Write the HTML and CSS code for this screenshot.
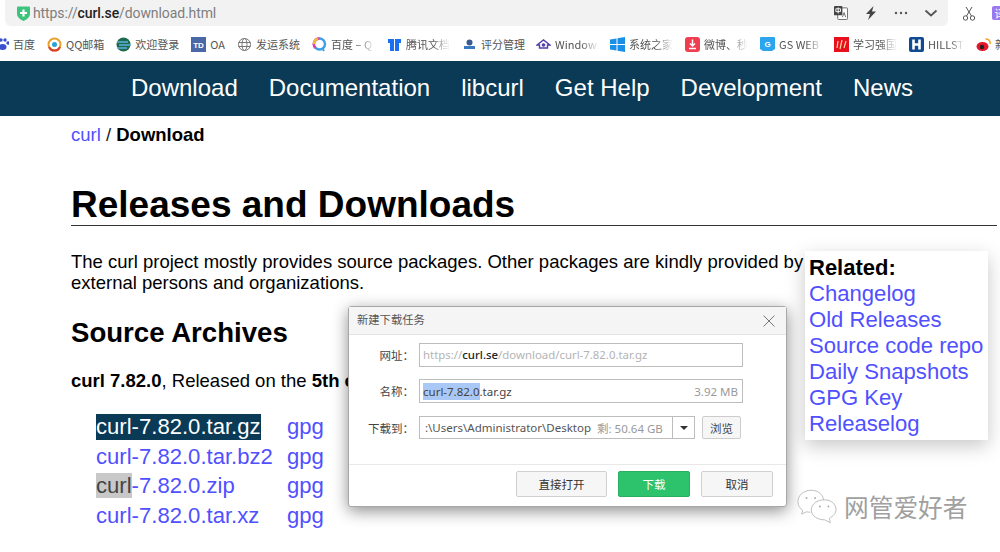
FILE: index.html
```html
<!DOCTYPE html>
<html lang="zh">
<head>
<meta charset="utf-8">
<title>curl - Download</title>
<link rel="stylesheet" href="styles.css">
</head>
<body>
<div class="toolbar">
  <div class="urlbar">
    <svg class="shield" viewBox="0 0 13 15"><path d="M0 1.500Q0 .5 1 .5H12Q13 .5 13 1.500V8Q13 12 6.500 15Q0 12 0 8Z" fill="#3cc47c"/><path d="M6.500 3.500V10.500M3 7H10" stroke="#fff" stroke-width="2.200"/></svg>
    <span class="url"><span class="dim">https://</span><b class="host">curl.se</b><span class="dim">/download.html</span></span>
    <div class="bar-tools">
      <svg class="ic14" viewBox="0 0 15 15"><rect x="4" y="2" width="10.500" height="12.500" rx="1" fill="#fff" stroke="#666"/><rect x="0" y="0" width="9" height="10" rx="1" fill="#444"/><path d="M2 3H7V6H2ZM4.500 1.500V8" stroke="#fff" fill="none"/><path d="M9 12L10.800 7L12.500 12" stroke="#666" fill="none"/></svg>
      <svg class="ic14" viewBox="0 0 14 14"><path d="M9.500 0L2 8H6L4 14L12 5.500H8Z" fill="#444"/></svg>
      <svg class="ic14" viewBox="0 0 14 14"><circle cx="2" cy="7" r="1.200" fill="#555"/><circle cx="7" cy="7" r="1.200" fill="#555"/><circle cx="12" cy="7" r="1.200" fill="#555"/></svg>
      <svg class="ic14" viewBox="0 0 14 14"><path d="M1.500 4.500L7 9.500L12.500 4.500" fill="none" stroke="#555" stroke-width="1.800"/></svg>
    </div>
  </div>
  <svg class="scissors" viewBox="0 0 12 15"><circle cx="2.500" cy="12" r="2.200" fill="none" stroke="#555"/><circle cx="9.500" cy="12" r="2.200" fill="none" stroke="#555"/><path d="M3.500 10L9 1M8.500 10L3 1" stroke="#555" fill="none"/></svg>
  <div class="purple">译</div>
</div>

<div class="bookmarks">
  <div class="bm first"><svg class="bi" viewBox="0 0 15 15"><g fill="#3a4fd0"><circle cx="3" cy="6" r="1.700"/><circle cx="7" cy="3" r="1.700"/><circle cx="11" cy="3" r="1.700"/><circle cx="14" cy="6" r="1.700"/><ellipse cx="8.500" cy="10" rx="4" ry="3"/></g></svg><span class="bt">百度</span></div>
  <div class="bm"><svg class="bi" viewBox="0 0 15 15"><circle cx="7.500" cy="7.500" r="6" fill="none" stroke="#e8a02c" stroke-width="2"/><path d="M2 10A6 6 0 0 0 13 10" fill="none" stroke="#d8402c" stroke-width="2"/><circle cx="7.500" cy="7.500" r="2.500" fill="#2ca0d8"/></svg><span class="bt">QQ邮箱</span></div>
  <div class="bm"><svg class="bi" viewBox="0 0 15 15"><circle cx="7.500" cy="7.500" r="7" fill="#1e6a4c"/><path d="M1 5H12M3 8H15M1 11H11" stroke="#5fb0e0" stroke-width="1.500"/></svg><span class="bt">欢迎登录</span></div>
  <div class="bm"><svg class="bi" viewBox="0 0 15 15"><rect width="15" height="15" fill="#4a68a8"/><text x="7.500" y="11" class="bi-text">TD</text></svg><span class="bt">OA</span></div>
  <div class="bm"><svg class="bi" viewBox="0 0 15 15"><circle cx="7.500" cy="7.500" r="6" fill="none" stroke="#777"/><ellipse cx="7.500" cy="7.500" rx="2.500" ry="6" fill="none" stroke="#777"/><path d="M1.500 5.500H13.500M1.500 9.500H13.500" stroke="#777"/></svg><span class="bt">发运系统</span></div>
  <div class="bm"><svg class="bi" viewBox="0 0 15 15"><circle cx="7.500" cy="7" r="5.500" fill="none" stroke="#3aa0e8" stroke-width="2.400"/><path d="M7.500 1.500A5.500 5.500 0 0 0 3.500 11" fill="none" stroke="#e040b0" stroke-width="2.400"/><path d="M2 7A5.500 5.500 0 0 1 6 1.700" fill="none" stroke="#f0c030" stroke-width="2.400"/><path d="M10 11L12 14" stroke="#3aa0e8" stroke-width="2"/></svg><span class="bt fade">百度 – Q</span></div>
  <div class="bm"><svg class="bi" viewBox="0 0 15 15"><path d="M1 2H7V14H3V6H1ZM8 2H14V6H12V14H8Z" fill="#1a70f0"/></svg><span class="bt fade">腾讯文档</span></div>
  <div class="bm tight"><svg class="bi" viewBox="0 0 15 15"><circle cx="7.500" cy="5.500" r="3" fill="#3a5a90"/><path d="M2 12H13V9H2Z" fill="#3a78c0"/></svg><span class="bt">评分管理</span></div>
  <div class="bm tight"><svg class="bi" viewBox="0 0 15 15"><path d="M1 8L7.500 3L14 8H11.500V11H3.500V8Z" fill="none" stroke="#5040a8" stroke-width="1.400"/><circle cx="7.500" cy="8" r="1.800" fill="#5040a8"/></svg><span class="bt fade">Windows</span></div>
  <div class="bm"><svg class="bi" viewBox="0 0 15 15"><path d="M0 2.500L6.500 1.500V7H0ZM7.500 1.300L15 0V7H7.500ZM0 8H6.500V13.500L0 12.500ZM7.500 8H15V15L7.500 13.700Z" fill="#1a8fe8"/></svg><span class="bt fade">系统之家</span></div>
  <div class="bm"><svg class="bi" viewBox="0 0 15 15"><rect width="15" height="15" rx="3" fill="#ee3e50"/><path d="M7.500 2.500V8.500M5 6.500L7.500 9L10 6.500M4 11.500H11" stroke="#fff" stroke-width="1.500" fill="none"/></svg><span class="bt fade">微博、秒</span></div>
  <div class="bm tight"><svg class="bi" viewBox="0 0 15 15"><path d="M0 1Q0 0 1 0H14Q15 0 15 1V12L12 14H3L0 12Z" fill="#2ba5ee"/><text x="7.500" y="9.500" class="bi-text">G</text></svg><span class="bt fade">GS WEB</span></div>
  <div class="bm"><svg class="bi" viewBox="0 0 15 15"><rect width="15" height="15" fill="#e8101c"/><path d="M4 4L3 11M8 3L6 12M12 4L10 11" stroke="#f8d8a0" stroke-width="1.200"/></svg><span class="bt fade">学习强国</span></div>
  <div class="bm"><svg class="bi" viewBox="0 0 15 15"><rect width="15" height="15" rx="2" fill="#104a90"/><path d="M4.500 2.500V12.500M10.500 2.500V12.500M4.500 7.500H10.500" stroke="#fff" stroke-width="2.600"/></svg><span class="bt fade short">HILLST</span></div>
  <div class="bm"><svg class="bi" viewBox="0 0 15 15"><ellipse cx="6.500" cy="9.500" rx="6" ry="4.500" fill="#e6162d"/><circle cx="6" cy="10" r="2.200" fill="#222"/><path d="M9.500 2A4 4 0 0 1 14 7" fill="none" stroke="#f0a020" stroke-width="1.500"/></svg><span class="bt">新</span></div>
</div>

<nav class="nav">
  <a>Download</a><a>Documentation</a><a>libcurl</a><a>Get Help</a><a>Development</a><a>News</a>
</nav>

<main class="page">
  <div class="crumb"><a class="lnk">curl</a> / <b>Download</b></div>
  <h1>Releases and Downloads</h1>
  <p class="intro">The curl project mostly provides source packages. Other packages are kindly provided by<br>external persons and organizations.</p>
  <h2>Source Archives</h2>
  <p class="rel"><b>curl 7.82.0</b>, Released on the <b>5th of March 2022</b>.</p>
  <div class="files">
    <a class="sel">curl-7.82.0.tar.gz</a><a class="lnk">gpg</a>
    <a class="lnk"><span>curl-7.82.0.tar.bz2</span></a><a class="lnk">gpg</a>
    <a class="lnk"><span class="grey">curl</span>-7.82.0.zip</a><a class="lnk">gpg</a>
    <a class="lnk">curl-7.82.0.tar.xz</a><a class="lnk">gpg</a>
  </div>
</main>

<aside class="related">
  <b>Related:</b>
  <a class="lnk">Changelog</a>
  <a class="lnk">Old Releases</a>
  <a class="lnk">Source code repo</a>
  <a class="lnk">Daily Snapshots</a>
  <a class="lnk">GPG Key</a>
  <a class="lnk">Releaselog</a>
</aside>

<section class="dialog">
  <header class="dlg-head"><span>新建下载任务</span>
    <svg class="close" viewBox="0 0 12 12"><path d="M.5 .5L11.500 11.500M11.500 .5L.5 11.500" stroke="#777" fill="none"/></svg>
  </header>
  <div class="dlg-body">
    <div class="row"><label>网址：</label><div class="field"><span class="faint">https://</span><b class="host">curl.se</b><span class="faint">/download/curl-7.82.0.tar.gz</span></div></div>
    <div class="row"><label>名称：</label><div class="field"><span><span class="picked">curl-7.82.0</span>.tar.gz</span><span class="size">3.92 MB</span></div></div>
    <div class="row"><label>下载到：</label>
      <div class="field combo"><span class="path">:\Users\Administrator\Desktop</span><span class="free">剩: 50.64 GB</span><span class="drop"><i class="tri"></i></span></div>
      <button class="browse">浏览</button>
    </div>
  </div>
  <footer class="dlg-foot">
    <button class="btn wide">直接打开</button>
    <button class="btn green">下载</button>
    <button class="btn">取消</button>
  </footer>
</section>

<div class="mark">
  <svg class="wx" viewBox="0 0 42 36"><path d="M15 1C7 1 1 6 1 13C1 17 3 20 6 22L5 26L10 23.500C11 24 13 24 14 24" fill="#fff" stroke="#bbb"/><path d="M15 1C22 1 27 5 28 11" fill="none" stroke="#bbb"/><circle cx="10" cy="9" r="1" fill="#aaa"/><circle cx="19" cy="9" r="1" fill="#aaa"/><path d="M29 11C21 11 15 15.500 15 21.500C15 27.500 21 32 29 32L35 35L34 30.500C38 28 41 25 41 21.500C41 15.500 36 11 29 11Z" fill="#fff" stroke="#bbb"/><circle cx="24" cy="18" r="1" fill="#aaa"/><circle cx="33" cy="18" r="1" fill="#aaa"/></svg>
  <span>网管爱好者</span>
</div>
</body>
</html>
```
FILE: styles.css
```css
* { box-sizing: border-box; }
html, body { margin: 0; padding: 0; }
body {
  width: 1000px;
  height: 552px;
  overflow: hidden;
  position: relative;
  background: #fff;
  font-family: "Liberation Sans", Arial, sans-serif;
  color: #000;
}
.toolbar { height: 27px; display: flex; align-items: flex-start; padding-left: 5px; overflow: hidden; }
.urlbar {
  width: 943px; height: 26px; flex: none;
  background: #f2f2f2;
  border-radius: 0 0 6px 6px;
  display: flex; align-items: center;
  padding: 0 10px 0 12px;
}
.shield { width: 13px; height: 15px; margin-right: 3px; }
.url { font: 14px "Roboto", "Liberation Sans", sans-serif; letter-spacing: -.1px; }
.dim { color: #7e7e7e; }
.host { color: #222; font-weight: 500; }
.bar-tools { margin-left: auto; display: flex; gap: 16px; align-items: center; }
.ic14 { width: 14px; height: 14px; display: block; }
.scissors { width: 12px; height: 15px; margin: 6px 0 0 15px; flex: none; }
.purple {
  width: 16px; height: 14px; margin: 6px 0 0 17px; flex: none;
  background: #9a78f0; border-radius: 2px; color: #fff;
  font: 11px/14px "Noto Sans CJK SC", sans-serif; text-align: center;
}

.bookmarks {
  height: 34px;
  display: flex; align-items: center; gap: 12px;
  margin-left: -6px;
  white-space: nowrap;
  overflow: hidden;
}
.bm { display: flex; align-items: center; gap: 4px; flex: none; }
.bm.tight { margin-right: -1px; }
.bi { width: 15px; height: 15px; display: block; flex: none; }
.bi-text { font: bold 8px "Liberation Sans", sans-serif; fill: #fff; text-anchor: middle; }
.bt { font: 11px "Noto Sans CJK SC", "Noto Sans", sans-serif; color: #555; max-width: 46px; overflow: hidden; }
.fade { -webkit-mask-image: linear-gradient(to right, #000 60%, transparent); mask-image: linear-gradient(to right, #000 60%, transparent); width: 44px; }
.fade.short { width: 36px; }

.nav {
  height: 55px;
  background: #0a3a56;
  display: flex; align-items: center; gap: 31px;
  padding: 0 0 1px 131px;
}
.nav a { color: #fff; font-size: 24px; }

.page { padding-left: 71px; }
.lnk { color: #5050ff; }
.crumb { font-size: 18.500px; margin-top: 7px; line-height: 24px; color: #222; }
.crumb b { color: #000; }
h1 {
  font-size: 37px; font-weight: bold; line-height: 44px;
  margin: 36px 3px 0 0;
  border-bottom: 1px solid #333;
  height: 43px;
}
.intro { font-size: 18.500px; line-height: 21px; margin: 25px 0 0; }
h2 { font-size: 27.600px; line-height: 32px; margin: 24px 0 0; }
.rel { font-size: 18.500px; line-height: 22px; margin: 21px 0 0; }
.files {
  display: grid;
  grid-template-columns: 191px auto;
  justify-content: start;
  margin: 20px 0 0 25px;
  font-size: 22.100px;
  line-height: 29.700px;
}
.sel { background: #0a3a56; color: #fff; justify-self: start; line-height: 25px; margin-top: 2px; margin-bottom: 2px; }
.grey { background: #c8c8c8; color: #444; }

.related {
  position: absolute; left: 805px; top: 251px; width: 183px; height: 189px;
  background: #fff;
  padding: 4px 0 0 4px;
  display: flex; flex-direction: column;
  font-size: 22.100px; line-height: 26px;
  white-space: nowrap;
  box-shadow: 0 6px 18px rgba(0,0,0,.22);
}
.related b { font-size: 22px; }

.dialog {
  position: absolute; left: 348px; top: 306px; width: 439px; height: 201px;
  background: #fff;
  border: 1px solid #a8a8a8; border-radius: 3px;
  box-shadow: 0 4px 16px rgba(0,0,0,.45);
  font: 12px "Noto Sans", "Noto Sans CJK SC", sans-serif;
  color: #444;
  display: flex; flex-direction: column;
}
.dlg-head {
  height: 28px; background: #f5f5f5; border-bottom: 1px solid #e4e4e4;
  display: flex; align-items: center; justify-content: space-between;
  padding: 0 11px 3px 8px; color: #555; font-size: 11.300px;
  font-family: "Noto Sans CJK SC", sans-serif;
}
.close { width: 12px; height: 12px; margin-top: 3px; }
.dlg-body { flex: 1; padding: 8px 0 0; display: flex; flex-direction: column; gap: 13.500px; }
.row { display: flex; align-items: center; height: 23px; }
label { width: 67px; padding-right: 2px; text-align: right; font: 11.500px "Noto Sans CJK SC", sans-serif; color: #444; flex: none; margin-right: 3px; }
.field {
  width: 324px; height: 24px; flex: none;
  border: 1px solid #bdbdbd;
  display: flex; align-items: center; justify-content: space-between;
  padding: 0 4px 0 3px; font-size: 11.500px;
  white-space: nowrap;
}
.faint { color: #b4b4b4; }
.row:first-child .field { justify-content: flex-start; font-size: 11.400px; }
.picked { background: #a9c8f5; display: inline-block; height: 17px; line-height: 17px; }
.size { color: #999; }
.combo { width: 276px; padding: 0; height: 23px; justify-content: flex-start; color: #555; }
.path { padding-left: 5px; }
.free { color: #999; margin-left: 6px; }
.drop { margin-left: auto; width: 22px; height: 100%; border-left: 1px solid #bdbdbd; display: flex; align-items: center; justify-content: center; }
.tri { width: 0; height: 0; border: 4px solid transparent; border-top: 4px solid #333; border-bottom: 0; }
.browse {
  width: 39px; height: 23px; margin-left: 7px; padding: 0;
  background: #f6f6f6; border: 1px solid #ccc; border-radius: 2px;
  font: 11.500px "Noto Sans CJK SC", sans-serif; color: #444;
}
.dlg-foot {
  height: 42px; border-top: 1px solid #e8e8e8;
  display: flex; justify-content: flex-end; gap: 11px;
  padding: 6px 13px 0 0;
}
.btn {
  width: 72px; height: 26px; padding: 0;
  background: #f6f6f6; border: 1px solid #d0d0d0; border-radius: 2px;
  font: 11.500px "Noto Sans CJK SC", sans-serif; color: #333;
}
.btn.wide { width: 91px; }
.btn.green { background: #2dc26c; border-color: #27b060; color: #fff; }

.mark {
  position: absolute; left: 797px; top: 488px;
  display: flex; align-items: center; gap: 7px;
  font: 24.700px "Noto Sans CJK SC", sans-serif; color: #a0a0a0;
  white-space: nowrap;
}
.wx { width: 40px; height: 35px; }
```
